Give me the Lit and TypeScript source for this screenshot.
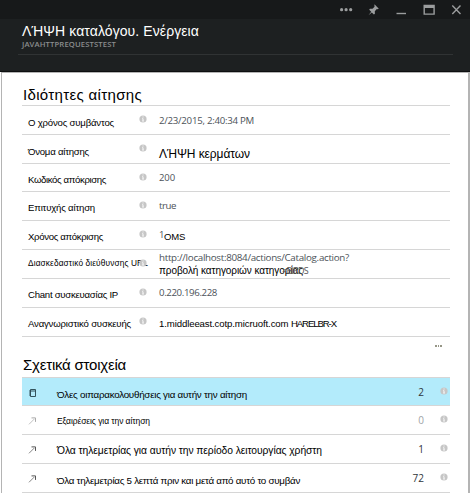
import { LitElement, html, svg, css } from "lit";
import { customElement, property } from "lit/decorators.js";
import { styleMap } from "lit/directives/style-map.js";
import { classMap } from "lit/directives/class-map.js";

/** One line of text, tracked so that it fills `span` pixels, with its baseline `base` pixels below the top. */
@customElement("fit-text")
class FitText extends LitElement {
  @property() text = "";
  @property({ type: Number }) size = 10;
  @property({ type: Number }) span = 0;
  @property({ type: Number }) base = 12;
  @property({ type: Boolean }) latin = false;

  static styles = css`
    :host { display: block; height: 0; white-space: pre; }
    .line { display: inline-block; vertical-align: top; line-height: 12px; }
    .latin { font-family: "Open Sans", "Noto Sans", sans-serif; }
  `;

  render() {
    const rise = this.latin ? 0.388 : 0.3465;
    const top = Math.round(this.base - 6 - rise * this.size);
    return html`<span class=${classMap({ line: true, latin: this.latin })}
      style=${styleMap({ fontSize: `${this.size}px`, marginTop: `${top}px` })}>${this.text}</span>`;
  }

  updated() {
    const line = this.renderRoot.querySelector<HTMLElement>(".line")!;
    line.style.letterSpacing = "0";
    if (!this.span) return;
    const natural = line.getBoundingClientRect().width;
    line.style.letterSpacing = `${(this.span - natural) / this.text.length}px`;
  }
}

type Run = { text: string; size: number; span: number; base: number; latin?: boolean; tone?: string };

const properties: { label: Run; values: Run[] }[] = [
  { label: { text: "Ο χρόνος συμβάντος", size: 9.6, span: 86, base: 20 }, values: [{ text: "2/23/2015, 2:40:34 PM", size: 9.7, span: 95, base: 19, latin: true, tone: "soft" }] },
  { label: { text: "Όνομα αίτησης", size: 9.6, span: 61, base: 20 }, values: [{ text: "ΛΉΨΗ κερμάτων", size: 12, span: 91, base: 23 }] },
  { label: { text: "Κωδικός απόκρισης", size: 9.6, span: 78, base: 19 }, values: [{ text: "200", size: 9.5, span: 16, base: 18, latin: true, tone: "soft" }] },
  { label: { text: "Επιτυχής αίτηση", size: 9.6, span: 67, base: 19 }, values: [{ text: "true", size: 9.7, span: 17, base: 18, latin: true, tone: "soft" }] },
  { label: { text: "Χρόνος απόκρισης", size: 9.6, span: 75, base: 19 }, values: [{ text: "1", size: 9.5, span: 5, base: 18, latin: true, tone: "soft" }, { text: "OMS", size: 9.5, span: 21, base: 19 }] },
  { label: { text: "Διασκεδαστικό διεύθυνσης URL", size: 8.3, span: 120, base: 16 }, values: [] },
  { label: { text: "Chant συσκευασίας IP", size: 9.6, span: 90, base: 19 }, values: [{ text: "0.220.196.228", size: 9.7, span: 58, base: 18, latin: true, tone: "soft" }] },
  { label: { text: "Αναγνωριστικό συσκευής", size: 9.6, span: 103, base: 19 }, values: [{ text: "1.middleeast.cotp.micruoft.com ", size: 9.6, span: 132, base: 19 }, { text: "HARELBR-X", size: 9.6, span: 45, base: 19 }] },
];

const related: { label: Run; count: Run; tone: string }[] = [
  { label: { text: "Όλες οιπαρακολουθήσεις για αυτήν την αίτηση", size: 9.8, span: 190, base: 20 }, count: { text: "2", size: 10, span: 0, base: 18, latin: true }, tone: "selected" },
  { label: { text: "Εξαιρέσεις για την αίτηση", size: 8.5, span: 93, base: 18 }, count: { text: "0", size: 10, span: 0, base: 18, latin: true }, tone: "faded" },
  { label: { text: "Όλα τηλεμετρίας για αυτήν την περίοδο λειτουργίας χρήστη", size: 10.3, span: 265, base: 20 }, count: { text: "1", size: 10, span: 0, base: 18, latin: true }, tone: "plain" },
  { label: { text: "Όλα τηλεμετρίας 5 λεπτά πριν και μετά από αυτό το συμβάν", size: 9.8, span: 243, base: 20 }, count: { text: "72", size: 10, span: 0, base: 18, latin: true }, tone: "plain" },
];

const run = (r: Run) => html`<fit-text class=${r.tone ?? ""} .text=${r.text} .size=${r.size} .span=${r.span} .base=${r.base} .latin=${!!r.latin}></fit-text>`;

const info = html`<svg class="info" viewBox="0 0 8 8"><circle cx="4" cy="4" r="3.6" fill="#c6c6c6" />${svg`<path d="M4 1.5v1M3.3 3.6H4v2.2M3.2 6h1.7" stroke="#fff" stroke-width=".9" fill="none" />`}</svg>`;

const book = html`<svg class="glyph" viewBox="0 0 9 10"><path d="M2.500 1.500h5v7h-5zM2.500 3h5M1 3h1.500M1 5h1.500M1 7h1.500" fill="none" stroke="#25424b" stroke-width=".9" /></svg>`;

const arrow = html`<svg class="glyph" viewBox="0 0 9 10"><path d="M1 8.3 6.2 3.1" fill="none" stroke="#777" stroke-width=".9" /><path d="M3.5 1.900h4v4" fill="none" stroke="#555" stroke-width="1" /></svg>`;

@customElement("app-root")
class AppRoot extends LitElement {
  static styles = css`
    :host { display: block; width: 470px; height: 493px; overflow: hidden; background: #fff; color: #000; font-family: "Liberation Sans", Arial, sans-serif; }
    .blade { display: flex; flex-direction: column; height: 493px; }
    .bar { height: 19px; background: #17191a; display: flex; justify-content: flex-end; }
    .controls { width: 130px; height: 19px; }
    .head { box-sizing: border-box; height: 53px; background: #1d2021; padding: 0 17px 0 18px; border-bottom: 1px solid #0d0f10; color: #fff; }
    .titles { height: 35px; padding-left: 4px; border-bottom: 1px solid #303334; }
    .sub { color: #8b8d8e; font-weight: 600; }
    .body { box-sizing: border-box; flex: 1; margin: 0 0 0 1px; padding: 0 18px 0 20px; border: solid #b4b4b4; border-width: 1px 2px 0 1px; }
    .heading { height: 32px; padding-left: 1px; }
    .heading.second { height: 24px; }
    .row { box-sizing: border-box; height: 28.83px; border-top: 1px solid #d6d6d6; display: grid; }
    .props { border-bottom: 1px solid #d6d6d6; }
    .prop { grid-template-columns: 111px 20px 1fr; padding-left: 6px; }
    .prop .info { margin-top: 9px; }
    .values { display: flex; align-items: flex-start; }
    .stack { display: block; }
    .tail { display: flex; }
    .birds { margin-left: -21px; color: #555; }
    .soft { color: #4c5258; }
    .info { width: 8px; height: 8px; display: block; }
    .more { display: flex; justify-content: flex-end; gap: 1px; height: 16px; padding: 8px 8px 0 0; box-sizing: border-box; }
    .more i { width: 1.6px; height: 2px; background: #969686; }
    .item { grid-template-columns: 29px 1fr auto 16px 10px; padding-left: 6px; }
    .item .info { margin-top: 9px; grid-column: 5; }
    .item.selected { background: #b3ebfb; }
    .glyph { width: 9px; height: 10px; margin-top: 10px; }
    .faded .glyph { opacity: .5; }
    .count { color: #30363c; }
    .faded .count { color: #a0a4a6; }
  `;

  render() {
    return html`<div class="blade">
      <div class="bar">
        <svg class="controls" viewBox="340 0 130 19" fill="#9b9d9e">
          <circle cx="341.6" cy="9.7" r="1.6" /><circle cx="346.1" cy="9.7" r="1.6" /><circle cx="350.7" cy="9.7" r="1.6" />
          <path d="m374.5 4.3 4.3 4.4-1.3.6-.7-.2-2 2.1.1 2.6-1 .7-2.1-2.1-3.3 2.8 2.7-3.5-2-2 .7-1 2.6.1 2.1-2-.2-.8z" />
          <path d="M396.5 12.8h9.5v1.4h-9.5z" />
          <path fill-rule="evenodd" d="M423.5 4.8h11.3v10h-11.3zm1.4 3.3v5.4h8.5V8.1z" />
          <path d="m452.3 5.5 8.2 8.4m0-8.4-8.2 8.4" fill="none" stroke="#9b9d9e" stroke-width="1.4" />
        </svg>
      </div>
      <div class="head"><div class="titles">
        ${run({ text: "ΛΉΨΗ καταλόγου. Ενέργεια", size: 14, span: 177, base: 17 })}
        ${run({ text: "JAVAHTTPREQUESTSTEST", size: 7.7, span: 94, base: 28, latin: true, tone: "sub" })}
      </div></div>
      <div class="body">
        <div class="heading">${run({ text: "Ιδιότητες αίτησης", size: 15, span: 119, base: 27 })}</div>
        <div class="props">
          ${properties.map((p) => html`<div class="row prop">
            ${run(p.label)}${info}
            ${p.values.length
              ? html`<div class="values">${p.values.map(run)}</div>`
              : html`<div class="stack">
                  ${run({ text: "http://localhost:8084/actions/Catalog.action?", size: 9.8, span: 190, base: 12, latin: true, tone: "soft" })}
                  <div class="tail">
                    ${run({ text: "προβολή κατηγοριών κατηγορίας", size: 10, span: 144, base: 24 })}
                    ${run({ text: "=BIRDS", size: 9, span: 26, base: 24, latin: true, tone: "birds" })}
                  </div>
                </div>`}
          </div>`)}
        </div>
        <div class="more"><i></i><i></i><i></i></div>
        <div class="heading second">${run({ text: "Σχετικά στοιχεία", size: 15, span: 103, base: 17 })}</div>
        <div class="props">
          ${related.map((r, i) => html`<div class="row item ${r.tone}">
            ${i === 0 ? book : arrow}${run(r.label)}<div class="count">${run(r.count)}</div>${info}
          </div>`)}
        </div>
      </div>
    </div>`;
  }
}
